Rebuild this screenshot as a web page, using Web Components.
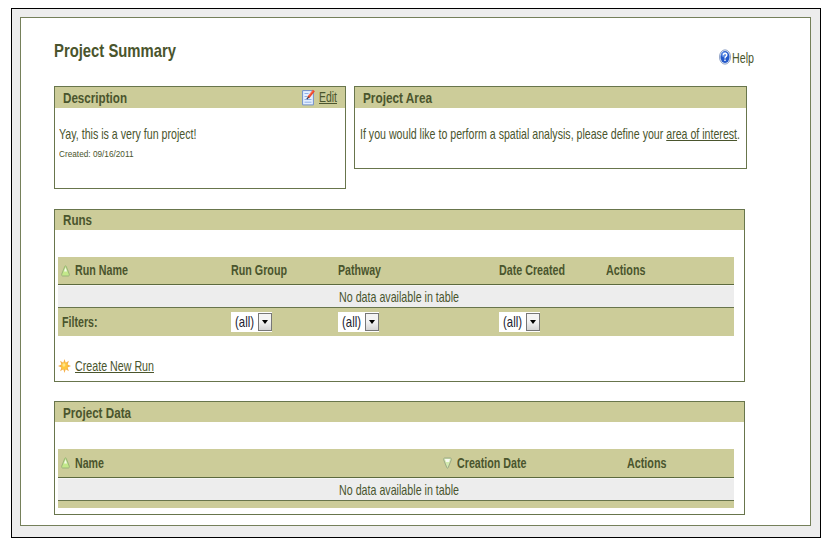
<!DOCTYPE html>
<html lang="en">
<head>
<meta charset="utf-8">
<title>Project Summary</title>
<style>
html,body{margin:0;background:#fff}
body{font-family:"Liberation Sans",Arial,sans-serif;color:#4a552d;width:835px;height:550px;overflow:hidden}
u{text-underline-offset:1px;text-decoration-thickness:1px}
.top{display:flex;justify-content:space-between;height:68px;padding-right:56px}
.two{display:flex;gap:8px;height:103px;align-items:flex-start;margin-bottom:20px}
.help{display:flex;gap:1px;padding-top:31px}
.row{display:flex;align-items:center}
</style>
</head>
<body>
<project-page>
  <div class="top">
    <fit-text w="122" size="18.4" bold lh="20" style="margin-top:23px">Project Summary</fit-text>
    <div class="help"><ui-icon name="help"></ui-icon><fit-text w="22" size="14.4" lh="19">Help</fit-text></div>
  </div>
  <div class="two">
    <ui-panel style="width:292px;height:103px">
      <fit-text slot="title" w="64" size="14.6" bold lh="22">Description</fit-text>
      <div slot="tools" class="row" style="gap:4px"><ui-icon name="edit"></ui-icon><fit-text w="18" size="14.2" lh="21"><u>Edit</u></fit-text></div>
      <div style="padding:17px 0 0 4px">
        <fit-text w="137.5" size="14.2" lh="18">Yay, this is a very fun project!</fit-text>
        <div style="padding-top:4px"><fit-text w="74.5" size="9" lh="14">Created: 09/16/2011</fit-text></div>
      </div>
    </ui-panel>
    <ui-panel style="width:393px;height:83px">
      <fit-text slot="title" w="69" size="14.6" bold lh="22">Project Area</fit-text>
      <div style="padding:17px 0 0 4.5px"><fit-text w="380" size="14.2" lh="18">If you would like to perform a spatial analysis, please define your <u>area of interest</u>.</fit-text></div>
    </ui-panel>
  </div>
  <ui-panel style="--bar:20px;width:691px;height:173px;margin-bottom:19px">
    <fit-text slot="title" w="29" size="14.6" bold lh="21">Runs</fit-text>
    <data-table style="--cols:173px 107px 161px 106.5px 1fr;margin-top:27px">
      <table-head slot="head"><ui-icon name="up"></ui-icon><fit-text w="53" size="14.2" bold lh="27">Run Name</fit-text></table-head>
      <fit-text slot="head" w="56" size="14.2" bold lh="27">Run Group</fit-text>
      <fit-text slot="head" w="43" size="14.2" bold lh="27">Pathway</fit-text>
      <fit-text slot="head" w="66" size="14.2" bold lh="27">Date Created</fit-text>
      <fit-text slot="head" w="39.5" size="14.2" bold lh="27">Actions</fit-text>
      <fit-text w="120" size="14.2" lh="22">No data available in table</fit-text>
      <fit-text slot="foot" w="35.5" size="14.2" bold lh="28" style="margin-left:4px">Filters:</fit-text>
      <filter-select slot="foot"></filter-select>
      <filter-select slot="foot"></filter-select>
      <filter-select slot="foot"></filter-select>
    </data-table>
    <div class="row" style="gap:4px;padding:19px 0 0 3px;height:21px"><ui-icon name="star"></ui-icon><fit-text w="79" size="14.2" lh="20"><u>Create New Run</u></fit-text></div>
  </ui-panel>
  <ui-panel style="--bar:20px;width:691px;height:114px">
    <fit-text slot="title" w="68" size="14.6" bold lh="22">Project Data</fit-text>
    <data-table style="--cols:382px 187px 1fr;--head:28px;margin-top:27px">
      <table-head slot="head"><ui-icon name="up"></ui-icon><fit-text w="29" size="14.2" bold lh="28">Name</fit-text></table-head>
      <table-head slot="head"><ui-icon name="down"></ui-icon><fit-text w="69.5" size="14.2" bold lh="28">Creation Date</fit-text></table-head>
      <fit-text slot="head" w="39.5" size="14.2" bold lh="28">Actions</fit-text>
      <fit-text w="120" size="14.2" lh="22">No data available in table</fit-text>
      <table-foot slot="foot"></table-foot>
    </data-table>
  </ui-panel>
</project-page>
<script>
const define = (name, html, extra) => customElements.define(name, class extends HTMLElement {
  connectedCallback() {
    if (this.shadowRoot) return;
    this.attachShadow({mode: 'open'}).innerHTML = html;
    if (extra) extra(this, this.shadowRoot);
  }
});

// Condensed single-line text, scaled horizontally to the width given by "w".
define('fit-text', `<style>:host{display:inline-block;white-space:nowrap;vertical-align:top;flex:none}
span{display:inline-block;transform-origin:0 0;vertical-align:top}</style><span><slot></slot></span>`, (el, root) => {
  const w = +el.getAttribute('w'), lh = el.getAttribute('lh');
  const span = root.querySelector('span');
  el.style.width = w + 'px';
  el.style.height = lh + 'px';
  span.style.cssText = `font-size:${el.getAttribute('size')}px;line-height:${lh}px;font-weight:${el.hasAttribute('bold') ? 700 : 400}`;
  span.style.transform = `scaleX(${w / span.getBoundingClientRect().width})`;
});

define('project-page', `<style>:host{display:block;padding:8px 14px 12px 11px}
.outer{box-sizing:border-box;width:810px;height:530px;border:1px solid #000;background:#ededed;padding:8px 9px 11px 8px}
.inner{box-sizing:border-box;width:791px;height:509px;border:1px solid #75805a;background:#fff;padding:0 0 0 33px}</style>
<div class="outer"><div class="inner"><slot></slot></div></div>`);

define('ui-panel', `<style>:host{display:block;box-sizing:border-box;border:1px solid #68754c;background:#fff;flex:none}
header{height:var(--bar,21px);box-sizing:border-box;background:#cccc99;display:flex;justify-content:space-between;padding:0 8px}</style>
<header><slot name="title"></slot><slot name="tools"></slot></header><slot></slot>`);

define('data-table', `<style>:host{display:block;width:676px;margin-left:3px}
.g{display:grid;grid-template-columns:var(--cols);background:#cccc99}
.head{height:var(--head,27px);border-bottom:1px solid #5c6a3e}
.body{height:21px;background:#ededed;border-top:1px solid #f6f6f4;padding-left:281px}
.foot{border-top:1px solid #68754c}</style>
<div class="g head"><slot name="head"></slot></div><div class="body"><slot></slot></div><div class="g foot"><slot name="foot"></slot></div>`);

define('table-head', `<style>:host{display:flex;gap:5px;padding-left:3px;align-items:center}</style><slot></slot>`);
define('table-foot', `<style>:host{display:block;height:7px}</style>`);

define('filter-select', `<style>:host{display:flex;box-sizing:border-box;width:41px;height:20px;background:#fff;margin-top:4px;padding:1px 0 1px 4px;color:#222230;justify-content:space-between}
i{box-sizing:border-box;width:14px;height:18px;border:1px solid #777;background:linear-gradient(#f4f4f4 45%,#d4d4d4);display:flex;align-items:center;justify-content:center}
i::after{content:"";border:3px solid transparent;border-top:4px solid #000;border-bottom:0}</style>
<fit-text w="19" size="14.2" lh="19">(all)</fit-text><i></i>`);

const icons = {
  up: [9, 12, '<path d="M3.9 1.2Q4.5.4 5.1 1.2L8.3 9.2Q8.6 10.9 7.4 11H1.6Q.4 10.9.7 9.2Z" fill="#c3e88a" stroke="#9ab27a"/><path d="M4.5 2.5L6 6.5H3Z" fill="#f4faea"/>'],
  down: [9, 12, '<path d="M3.9 10.8Q4.5 11.6 5.1 10.8L8.3 2.8Q8.6 1.1 7.4 1H1.6Q.4 1.1.7 2.8Z" fill="#d3eab0" stroke="#9ba887"/><path d="M2 2H7L6 5H3Z" fill="#f8fbf2"/>'],
  star: [13, 14, '<path d="M6.5 0L7.7 3.8 10.9 1.7 9.6 5.5 13 7 9.6 8.5 10.9 12.3 7.7 10.2 6.5 14 5.3 10.2 2.1 12.3 3.4 8.5 0 7 3.4 5.5 2.1 1.7 5.3 3.8Z" fill="#f5b04a"/><ellipse cx="6.5" cy="7" rx="3.1" ry="3.5" fill="#ffc73c"/><ellipse cx="5.9" cy="6" rx="1.5" ry="1.7" fill="#ffe48a"/>'],
  help: [12, 16, '<ellipse cx="6" cy="8" rx="5.6" ry="7.2" fill="#d6e2f5" stroke="#8195bd" stroke-width=".8"/><ellipse cx="6" cy="8" rx="4.5" ry="5.9" fill="#2459c9"/><ellipse cx="5" cy="5.5" rx="2.6" ry="2.8" fill="#5d8de6"/><path d="M4.2 6.2Q4.3 4.3 6.1 4.3 7.9 4.4 7.8 6.1 7.7 7.2 6.6 7.8 6 8.3 6 9.4M6 10.6V12" fill="none" stroke="#fff" stroke-width="1.4"/>'],
  edit: [13, 17, '<path d="M.6 1.6H11.4V15.9H.6Z" fill="#e4efff" stroke="#7190cb"/><path d="M2.5 4.5H6.5M2.5 7.5H5M2.5 10.5H9.5M2.5 13.2H9.5" stroke="#8eafe8"/><path d="M11.9 1.4L6.3 8.6" stroke="#ee4a2b" stroke-width="2.5"/><path d="M6.7 8L4.8 10.2" stroke="#3f4054" stroke-width="1.3"/><path d="M10.9 1.5L6.6 7" stroke="#ff9878" stroke-width=".6"/>']
};
define('ui-icon', `<style>:host{display:block;flex:none}svg{display:block}</style>`, (el, root) => {
  const [w, h, body] = icons[el.getAttribute('name')];
  root.innerHTML += `<svg width="${w}" height="${h}" viewBox="0 0 ${w} ${h}">${body}</svg>`;
});
</script>
</body>
</html>
